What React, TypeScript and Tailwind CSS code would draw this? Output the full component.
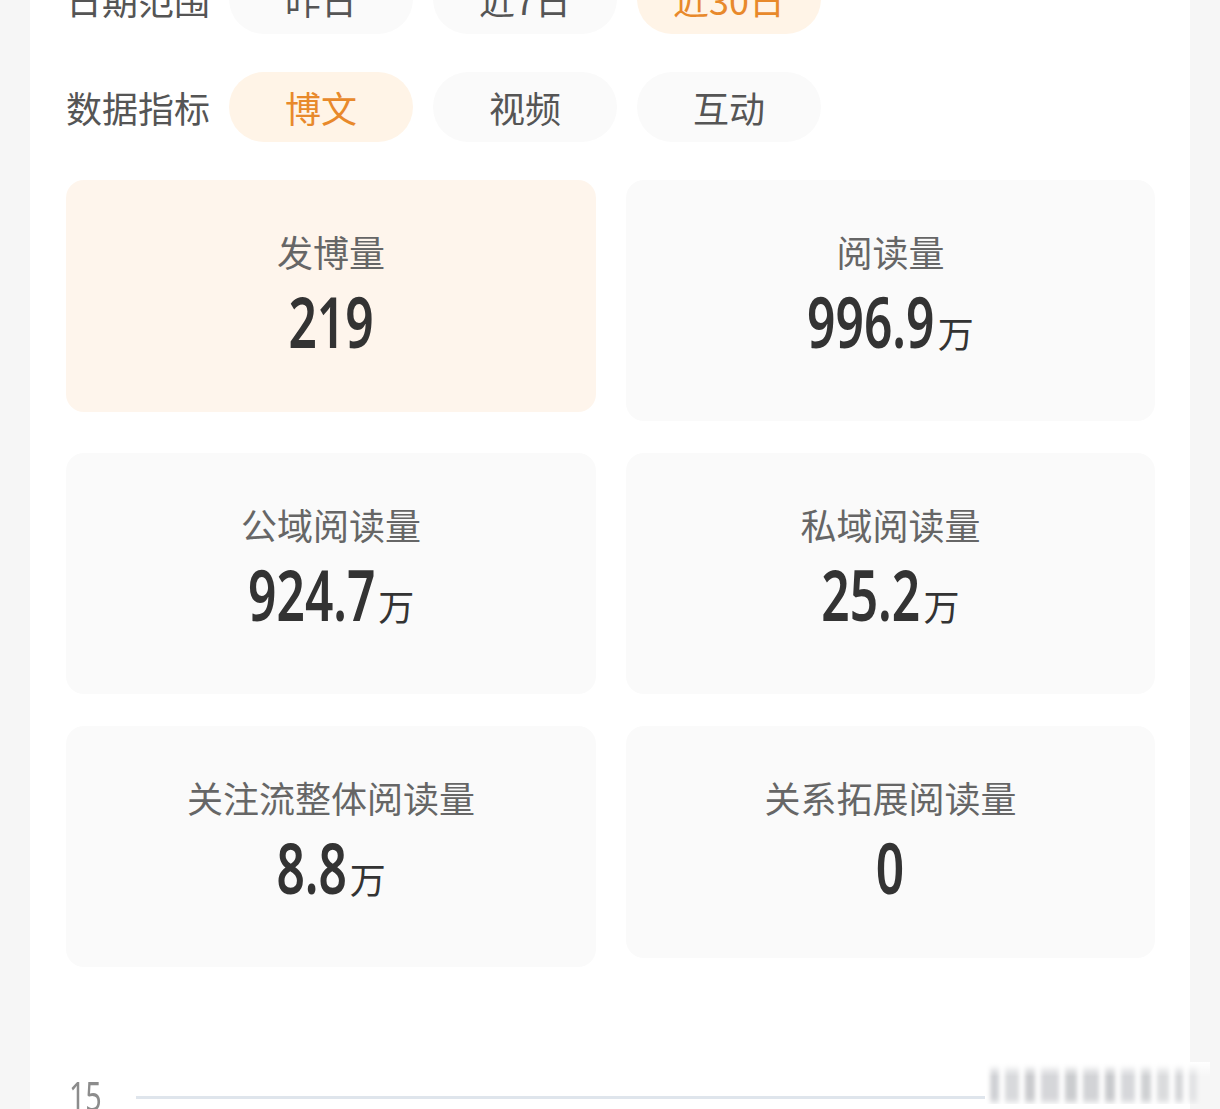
import React from "react";

const cjk = '"Noto Sans CJK SC", "Noto Sans", sans-serif';

function Pill({ text, active }: { text: string; active?: boolean }) {
  return (
    <div
      className={
        "w-[184px] h-[70px] rounded-full flex items-center justify-center text-[36px] leading-none " +
        (active ? "bg-[#fff4e7] text-[#e8892b]" : "bg-[#fafafa] text-[#555555]")
      }
    >
      {text}
    </div>
  );
}

function Row({ label, items, activeIndex }: { label: string; items: string[]; activeIndex: number }) {
  return (
    <div className="flex items-center h-[70px]">
      <div className="w-[144px] text-[36px] leading-none text-[#555555] whitespace-nowrap">{label}</div>
      <div className="ml-[19px] flex gap-[20px]">
        {items.map((t, i) => (
          <Pill key={t} text={t} active={i === activeIndex} />
        ))}
      </div>
    </div>
  );
}

function numberWidthEm(v: string) {
  let w = 0;
  for (const ch of v) w += ch === "." ? 0.27 : 0.572;
  return w;
}

function Card({
  label,
  value,
  unit,
  active,
  short,
}: {
  label: string;
  value: string;
  unit?: string;
  active?: boolean;
  short?: boolean;
}) {
  const shrink = -0.145 * numberWidthEm(value);
  return (
    <div
      className={
        "rounded-[18px] flex flex-col items-center pt-[53px] " +
        (short ? "h-[232px] self-start " : "h-[241px] ") +
        (active ? "bg-[#fef5ec]" : "bg-[#fafafa]")
      }
    >
      <div className="text-[36px] leading-[36px] text-[#666666] whitespace-nowrap">{label}</div>
      <div className="mt-[17px] flex items-baseline text-[#333333]">
        <span
          className="inline-block text-[70px] leading-[70px] font-semibold scale-x-[0.71] origin-center"
          style={{
            fontFamily: '"Noto Sans", sans-serif',
            marginLeft: `${shrink}em`,
            marginRight: `${shrink}em`,
          }}
        >
          {value}
        </span>
        {unit && <span className="text-[36px] leading-none ml-[3px]">{unit}</span>}
      </div>
    </div>
  );
}

function BlurBars() {
  const bars = [
    { x: 0, w: 5, c: "#ffffff" },
    { x: 5, w: 9, c: "#cfd0d4" },
    { x: 20, w: 14, c: "#d8d9dc" },
    { x: 40, w: 10, c: "#c9cacd" },
    { x: 56, w: 18, c: "#d5d6d9" },
    { x: 80, w: 12, c: "#cbcccf" },
    { x: 98, w: 16, c: "#d2d3d6" },
    { x: 120, w: 10, c: "#c8c9cc" },
    { x: 136, w: 14, c: "#d6d7da" },
    { x: 156, w: 10, c: "#cfd0d3" },
    { x: 172, w: 12, c: "#dadbdd" },
    { x: 190, w: 8, c: "#d4d5d8" },
    { x: 204, w: 8, c: "#e2e3e5" },
  ];
  return (
    <svg width="225" height="42" viewBox="0 0 225 42" className="block">
      <defs>
        <filter id="bl" x="-10%" y="-30%" width="120%" height="160%">
          <feGaussianBlur stdDeviation="2.2 3" />
        </filter>
        <linearGradient id="fade" x1="0" y1="0" x2="0" y2="1">
          <stop offset="0" stopColor="#ffffff" stopOpacity="1" />
          <stop offset="0.35" stopColor="#ffffff" stopOpacity="0" />
        </linearGradient>
      </defs>
      <g filter="url(#bl)">
        {bars.map((b, i) => (
          <rect key={i} x={b.x} y={4} width={b.w} height={36} fill={b.c} />
        ))}
      </g>
      <rect x="0" y="0" width="225" height="42" fill="url(#fade)" />
    </svg>
  );
}

export default function App() {
  return (
    <div
      className="h-[1109px] overflow-hidden bg-[#f6f6f6] px-[30px]"
      style={{ fontFamily: cjk }}
    >
      <div className="h-full bg-white pl-[36px] pr-[35px] flex flex-col">
        <div className="-mt-[36px] flex flex-col gap-[38px] shrink-0">
          <Row label="日期范围" items={["昨日", "近7日", "近30日"]} activeIndex={2} />
          <Row label="数据指标" items={["博文", "视频", "互动"]} activeIndex={0} />
          <div className="grid grid-cols-[530px_529px] gap-x-[30px] gap-y-[32px]">
            <Card label="发博量" value="219" active short />
            <Card label="阅读量" value="996.9" unit="万" />
            <Card label="公域阅读量" value="924.7" unit="万" />
            <Card label="私域阅读量" value="25.2" unit="万" />
            <Card label="关注流整体阅读量" value="8.8" unit="万" />
            <Card label="关系拓展阅读量" value="0" short />
          </div>
        </div>
        <div className="mt-[95px] flex items-end shrink-0">
          <div className="w-[70px] shrink-0 flex">
            <span
              className="inline-block pl-[4px] text-[40px] leading-[40px] text-[#8c8c8c] scale-x-[0.72] origin-left"
              style={{ fontFamily: '"Noto Sans", sans-serif' }}
            >
              15
            </span>
          </div>
          <div className="flex-1 flex items-end -mr-[55px]">
            <div className="flex-1 h-[3px] bg-[#dfe5ec] mb-[17px]" />
            <div className="mb-[12px]">
              <BlurBars />
            </div>
          </div>
        </div>
      </div>
    </div>
  );
}
